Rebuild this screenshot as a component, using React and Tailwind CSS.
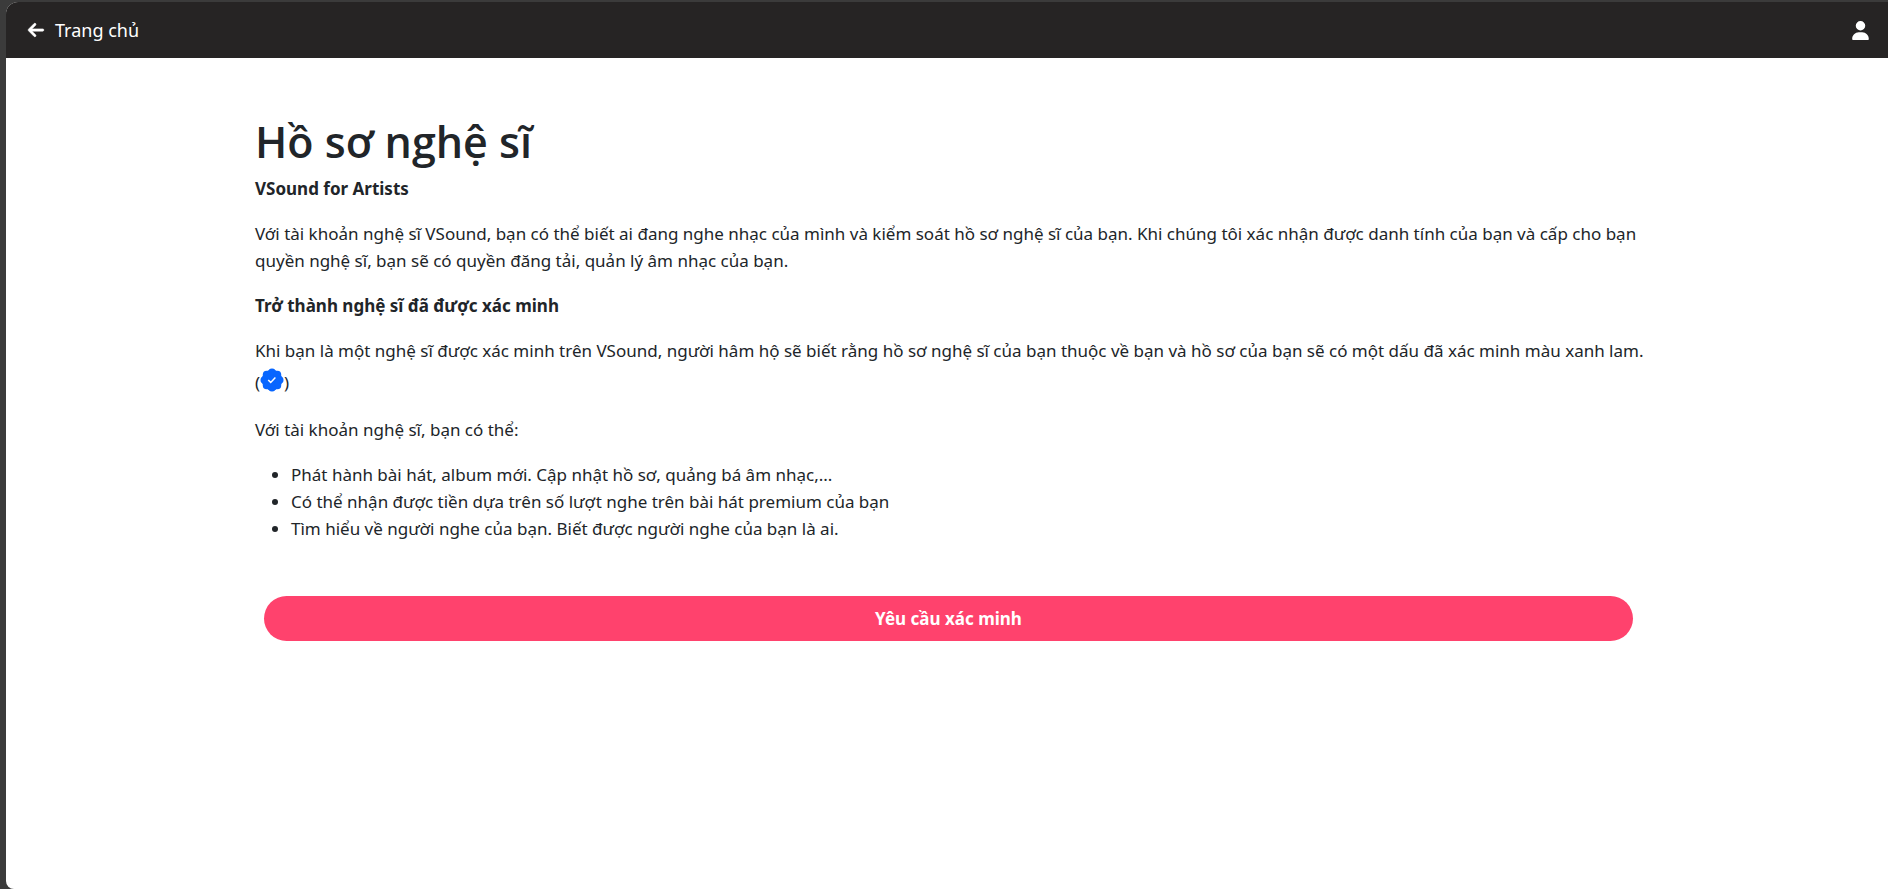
import { FaArrowLeft, FaUser } from "react-icons/fa6";

const benefits = [
  "Phát hành bài hát, album mới. Cập nhật hồ sơ, quảng bá âm nhạc,...",
  "Có thể nhận được tiền dựa trên số lượt nghe trên bài hát premium của bạn",
  "Tìm hiểu về người nghe của bạn. Biết được người nghe của bạn là ai.",
];

function VerifiedBadge() {
  return (
    <svg viewBox="0 0 24 24" className="mb-1 size-6" role="img" aria-label="Đã xác minh">
      <g fill="#0866ff">
        <circle cx="12" cy="12" r="10.3" />
        <circle cx="12" cy="4.3" r="3.8" />
        <circle cx="17.4" cy="6.6" r="3.8" />
        <circle cx="19.7" cy="12" r="3.8" />
        <circle cx="17.4" cy="17.4" r="3.8" />
        <circle cx="12" cy="19.7" r="3.8" />
        <circle cx="6.6" cy="17.4" r="3.8" />
        <circle cx="4.3" cy="12" r="3.8" />
        <circle cx="6.6" cy="6.6" r="3.8" />
      </g>
      <path d="M8.2 12l2.5 2.4 4.7-4.8" fill="none" stroke="#fff" strokeWidth="1.5" />
    </svg>
  );
}

export default function App() {
  return (
    <div className="flex min-h-screen flex-col bg-[#3b3b3b] pt-0.5 pl-1.5 font-['Noto_Sans','Open_Sans',sans-serif] text-[17px] leading-[27px] text-[#212529]">
      <div className="flex grow flex-col overflow-hidden rounded-tl-xl rounded-bl-lg bg-white">
        <header className="flex h-14 items-center justify-between bg-[#262424] pr-[18px] pl-[21px] text-lg text-white">
          <a href="#home" className="flex items-center gap-2.5">
            <FaArrowLeft className="size-[18px]" stroke="currentColor" strokeWidth="16" />
            Trang chủ
          </a>
          <button type="button" aria-label="Tài khoản">
            <FaUser className="size-[19px]" />
          </button>
        </header>

        <main className="mx-auto flex w-full max-w-[1390px] flex-col gap-[18px] pt-[57px] pl-[3px]">
          <div>
            <h1 className="mb-1.5 font-['Open_Sans','Noto_Sans',sans-serif] text-[43px] leading-[54px] font-semibold">
              Hồ sơ nghệ sĩ
            </h1>
            <p className="font-bold">VSound for Artists</p>
          </div>
          <p>
            Với tài khoản nghệ sĩ VSound, bạn có thể biết ai đang nghe nhạc của mình và kiểm soát hồ sơ nghệ sĩ của bạn.
            Khi chúng tôi xác nhận được danh tính của bạn và cấp cho bạn quyền nghệ sĩ, bạn sẽ có quyền đăng tải, quản lý
            âm nhạc của bạn.
          </p>
          <h2 className="font-bold">Trở thành nghệ sĩ đã được xác minh</h2>
          <p className="-mr-4 pb-0.5">
            Khi bạn là một nghệ sĩ được xác minh trên VSound, người hâm hộ sẽ biết rằng hồ sơ nghệ sĩ của bạn thuộc về
            bạn và hồ sơ của bạn sẽ có một dấu đã xác minh màu xanh lam.{" "}
            <span className="inline-flex h-8 items-end align-top">
              (<VerifiedBadge />)
            </span>
          </p>
          <p>Với tài khoản nghệ sĩ, bạn có thể:</p>
          <ul className="list-disc pl-9">
            {benefits.map((benefit) => (
              <li key={benefit}>{benefit}</li>
            ))}
          </ul>
          <button
            type="button"
            className="mx-[9px] mt-9 h-[45px] rounded-full bg-[#ff426d] font-bold text-white"
          >
            Yêu cầu xác minh
          </button>
        </main>
      </div>
    </div>
  );
}
